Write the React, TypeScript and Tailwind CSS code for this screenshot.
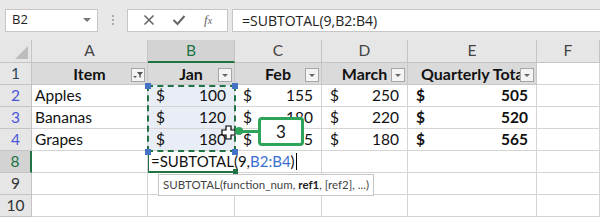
import React from "react";

const font = { fontFamily: "Lato, 'Open Sans', sans-serif" };

const colW = "grid-cols-[32px_116px_87px_87px_86px_129px_1fr]";

const FilterBtn = ({ funnel }: { funnel?: boolean }) => (
  <div className="absolute right-[2px] top-[5px] flex h-[14px] w-[14px] items-center justify-center border border-[#a6a6a6] bg-[#f4f4f4]">
    {funnel ? (
      <svg width="12" height="12" viewBox="0 0 12 12">
        <path d="M1 7 L3 9 L5 7 Z" fill="#555" />
        <path d="M5 3 H11 L8.7 6 V9 L7.3 8 V6 Z" fill="#555" />
      </svg>
    ) : (
      <svg width="10" height="10" viewBox="0 0 10 10">
        <path d="M2 4 H8 L5 7 Z" fill="#666" />
      </svg>
    )}
  </div>
);

const Money = ({ v, bold }: { v: string; bold?: boolean }) => (
  <div className={`flex h-full items-center justify-between px-[8px] ${bold ? "font-bold" : ""}`}>
    <span>$</span>
    <span>{v}</span>
  </div>
);

export default function App() {
  const cell = "border-r border-b border-[#d4d4d4] h-[22px] overflow-hidden whitespace-nowrap";
  const colHead = "flex items-center justify-center border-r border-b border-[#c4c4c4] bg-[#e6e6e6] text-[#444] h-[23px]";
  const rowHead = "flex items-center justify-center border-r border-b border-[#c4c4c4] bg-[#e6e6e6] h-[22px]";
  const hdr = "relative flex items-center justify-center bg-[#dadada] font-bold text-[16px] text-[#111] border-r border-b border-[#c8c8c8] h-[22px] overflow-hidden whitespace-nowrap";

  const data = [
    { n: "2", item: "Apples", b: "100", c: "155", d: "250", e: "505" },
    { n: "3", item: "Bananas", b: "120", c: "180", d: "220", e: "520" },
    { n: "4", item: "Grapes", b: "180", c: "205", d: "180", e: "565" },
  ];

  return (
    <div className="h-[217px] w-[600px] overflow-hidden bg-white text-[15.5px] text-[#111]" style={font}>
      {/* formula bar */}
      <div className="flex h-[40px] items-center bg-[#e8e8e8] pl-[5px]" style={{ fontFamily: "'Open Sans', sans-serif" }}>
        <div className="flex h-[23px] w-[93px] items-center justify-between border border-[#c6c6c6] bg-white pl-[6px] pr-[6px] text-[13px] text-[#222]">
          <span>B2</span>
          <svg width="8" height="6" viewBox="0 0 8 6">
            <path d="M0 1 H8 L4 5 Z" fill="#777" />
          </svg>
        </div>
        <div className="flex w-[29px] flex-col items-center gap-[2px]">
          <span className="h-[2px] w-[2px] bg-[#aaa]" />
          <span className="h-[2px] w-[2px] bg-[#aaa]" />
          <span className="h-[2px] w-[2px] bg-[#aaa]" />
        </div>
        <div className="flex h-[23px] w-[101px] items-center justify-around border border-[#c6c6c6] bg-white px-[6px]">
          <svg width="12" height="12" viewBox="0 0 12 12">
            <path d="M1.5 1.5 L10.5 10.5 M10.5 1.5 L1.5 10.5" stroke="#666" strokeWidth="1.6" />
          </svg>
          <svg width="14" height="12" viewBox="0 0 14 12">
            <path d="M1.5 6 L5.5 10 L12.5 2" stroke="#666" strokeWidth="2" fill="none" />
          </svg>
          <span className="text-[13px] italic text-[#666]" style={{ fontFamily: "'Liberation Serif', serif" }}>
            f<span className="text-[10px]">x</span>
          </span>
        </div>
        <div className="ml-[4px] flex h-[23px] flex-1 items-center border border-r-0 border-[#c6c6c6] bg-white pl-[9px] text-[14px] text-[#222]">
          =SUBTOTAL(9,B2:B4)
        </div>
      </div>

      {/* sheet */}
      <div className="relative">
        <div className={`grid ${colW}`}>
          {/* column headers */}
          <div className="relative h-[23px] border-r border-b border-[#c4c4c4] bg-[#e6e6e6]">
            <svg className="absolute bottom-[3px] right-[3px]" width="13" height="13" viewBox="0 0 13 13">
              <path d="M13 0 V13 H0 Z" fill="#bdbdbd" />
            </svg>
          </div>
          <div className={colHead}>A</div>
          <div className="flex h-[23px] items-center justify-center border-r border-b-2 border-r-[#c4c4c4] border-b-[#217346] bg-[#d3d3d3] text-[#217346]">B</div>
          <div className={colHead}>C</div>
          <div className={colHead}>D</div>
          <div className={colHead}>E</div>
          <div className={colHead}>F</div>

          {/* row 1 */}
          <div className={`${rowHead} text-[#2f4858]`}>1</div>
          <div className={hdr}>
            Item
            <FilterBtn funnel />
          </div>
          <div className={hdr}>
            Jan
            <FilterBtn />
          </div>
          <div className={hdr}>
            Feb
            <FilterBtn />
          </div>
          <div className={hdr}>
            March
            <FilterBtn />
          </div>
          <div className={`${hdr} justify-start pl-[13px]`}>
            Quarterly Total
            <FilterBtn />
          </div>
          <div className={cell}></div>

          {data.map((r) => (
            <React.Fragment key={r.n}>
              <div className={`${rowHead} text-[#4a55d8]`}>{r.n}</div>
              <div className={`${cell} flex items-center pl-[3px]`}>{r.item}</div>
              <div className={`${cell} bg-[#e8edf6]`}>
                <Money v={r.b} />
              </div>
              <div className={cell}>
                <Money v={r.c} />
              </div>
              <div className={cell}>
                <Money v={r.d} />
              </div>
              <div className={cell}>
                <Money v={r.e} bold />
              </div>
              <div className={cell}></div>
            </React.Fragment>
          ))}

          {/* row 8 */}
          <div className="flex h-[22px] items-center justify-center border-r-2 border-b border-r-[#217346] border-b-[#c4c4c4] bg-[#d3d3d3] text-[#217346]">8</div>
          <div className={cell}></div>
          <div className="relative h-[22px] border-b-2 border-l border-[#217346]">
            <div className="absolute left-[2px] top-0 z-10 flex h-[21px] items-center whitespace-nowrap text-[15px] text-[#111]">
              =SUBTOTAL(9,<span className="text-[#3b6fd0]">B2:B4</span>)
              <span className="ml-[1px] h-[17px] w-[1px] bg-black" />
            </div>
            <div className="absolute -bottom-[3px] -right-[3px] h-[5px] w-[5px] bg-[#217346]" />
          </div>
          <div className={cell}></div>
          <div className={cell}></div>
          <div className={cell}></div>
          <div className={cell}></div>

          {["9", "10"].map((n) => (
            <React.Fragment key={n}>
              <div className={`${rowHead} text-[#333]`}>{n}</div>
              <div className={cell}></div>
              <div className={cell}></div>
              <div className={cell}></div>
              <div className={cell}></div>
              <div className={cell}></div>
              <div className={cell}></div>
            </React.Fragment>
          ))}
        </div>

        {/* marching ants around B2:B4 */}
        <div className="pointer-events-none absolute left-[147px] top-[45px] h-[67px] w-[89px] border-2 border-dashed border-[#217346]" />
        <div className="absolute left-[145px] top-[43px] h-[6px] w-[6px] bg-[#4472c4]" />
        <div className="absolute left-[232px] top-[43px] h-[6px] w-[6px] bg-[#4472c4]" />
        <div className="absolute left-[145px] top-[109px] h-[6px] w-[6px] bg-[#4472c4]" />
        <div className="absolute left-[232px] top-[109px] h-[6px] w-[6px] bg-[#4472c4]" />

        {/* tooltip */}
        <div
          className="absolute left-[158px] top-[134px] z-20 flex h-[22px] items-center border border-[#c6c6c6] bg-white px-[4px] text-[11.5px] text-[#444]"
          style={font}
        >
          SUBTOTAL(function_num,&nbsp;<b className="text-[#222]">ref1</b>, [ref2], ...)
        </div>

        {/* move cursor */}
        <svg className="absolute left-[221px] top-[85px] z-20" width="15" height="15" viewBox="0 0 15 15">
          <path
            d="M5 1 H10 V5 H14 V10 H10 V14 H5 V10 H1 V5 H5 Z"
            fill="white"
            stroke="black"
            strokeWidth="1.2"
          />
        </svg>

        {/* callout */}
        <div className="absolute left-[235px] top-[87px] z-20 h-[8px] w-[8px] rounded-full bg-[#2ea35a]" />
        <div className="absolute left-[240px] top-[89.5px] z-20 h-[3px] w-[20px] bg-[#2ea35a]" />
        <div className="absolute left-[258px] top-[77px] z-20 flex h-[29px] w-[46px] items-center justify-center rounded-[4px] border-[3px] border-[#2ea35a] bg-white text-[17px] text-[#111]">
          3
        </div>
      </div>
    </div>
  );
}
